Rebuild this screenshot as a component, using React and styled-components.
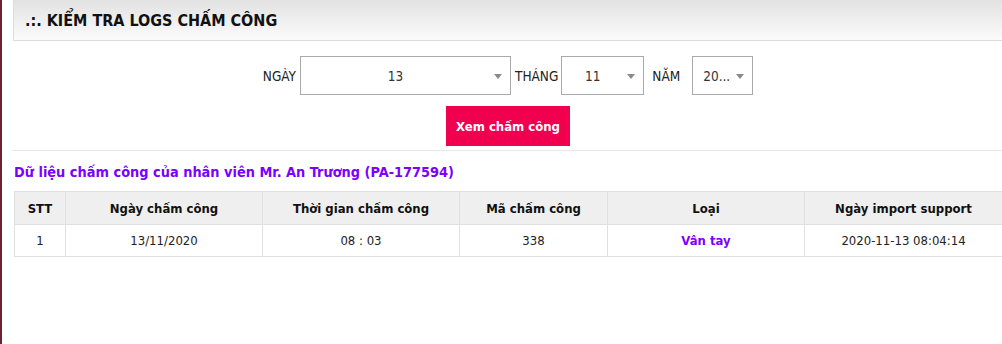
import styled, { createGlobalStyle } from 'styled-components';

const GlobalStyle = createGlobalStyle`
    body {
        margin: 0;
        background: #fff;
        font-family: "DejaVu Sans Condensed", "DejaVu Sans", Tahoma, sans-serif;
        overflow: hidden;
    }
`;

const Page = styled.div`
    border-left: 2px solid #6b2431;
    padding-left: 11px;
    min-height: 344px;
    box-sizing: border-box;
`;

const Content = styled.div`
    width: 990px;
`;

const Header = styled.div`
    height: 40px;
    border: 1px solid #dcdcdc;
    border-top: none;
    background: linear-gradient(to bottom, #e2e2e2, #fbfbfb);
    display: flex;
    align-items: center;
    padding-left: 11px;
`;

const Title = styled.h1`
    margin: 0;
    font-size: 16px;
    font-weight: bold;
    color: #111;
`;

const FilterRow = styled.div`
    display: flex;
    justify-content: center;
    align-items: center;
    margin-top: 15px;
`;

const Label = styled.span`
    font-size: 13.5px;
    color: #222;
    margin: ${(p) => p.$margin};
`;

const Select = styled.div`
    position: relative;
    box-sizing: border-box;
    width: ${(p) => p.$width}px;
    height: 39px;
    border: 1px solid #aaa;
    background: #fff;
    display: flex;
    align-items: center;
    justify-content: ${(p) => (p.$left ? 'flex-start' : 'center')};
    padding: ${(p) => (p.$left ? '0 0 0 10px' : '0 20px 0 0')};
    font-size: 13.5px;
    color: #333;

    &::after {
        content: '';
        position: absolute;
        right: 8px;
        top: 17px;
        border-left: 4px solid transparent;
        border-right: 4px solid transparent;
        border-top: 5px solid #8a8a8a;
    }
`;

const ButtonRow = styled.div`
    display: flex;
    justify-content: center;
    margin-top: 11px;
`;

const Button = styled.button`
    width: 124px;
    height: 40px;
    border: none;
    background: #f20050;
    color: #fff;
    font-family: inherit;
    font-size: 13px;
    font-weight: bold;
    white-space: nowrap;
    padding: 0;
    cursor: pointer;
`;

const Divider = styled.hr`
    margin: 4px 0 0;
    border: none;
    border-top: 1px solid #e6e6e6;
`;

const SubTitle = styled.h2`
    margin: 12px 0 0 1px;
    font-size: 14.4px;
    font-weight: bold;
    color: #7b00ff;
    line-height: 18px;
`;

const Table = styled.table`
    margin: 10px 0 0 1px;
    width: 988px;
    border-collapse: collapse;
    table-layout: fixed;
    font-size: 13px;
`;

const Th = styled.th`
    background: #efefef;
    border: 1px solid #e0e0e0;
    height: 32px;
    padding: 0;
    font-weight: bold;
    color: #111;
`;

const Td = styled.td`
    border: 1px solid #e0e0e0;
    height: 31px;
    padding: 0;
    text-align: center;
    color: ${(p) => (p.$accent ? '#7b00ff' : '#222')};
    font-weight: ${(p) => (p.$accent ? 'bold' : 'normal')};
`;

const columns = [
    { title: 'STT', width: 51 },
    { title: 'Ngày chấm công', width: 197 },
    { title: 'Thời gian chấm công', width: 197 },
    { title: 'Mã chấm công', width: 148 },
    { title: 'Loại', width: 197 },
    { title: 'Ngày import support', width: 198 },
];

const App = () => {
    return (
        <Page>
            <GlobalStyle />
            <Content>
                <Header>
                    <Title>.:. KIỂM TRA LOGS CHẤM CÔNG</Title>
                </Header>
                <FilterRow>
                    <Label $margin="0 4px 0 0">NGÀY</Label>
                    <Select $width={211}>13</Select>
                    <Label $margin="0 3px 0 4px">THÁNG</Label>
                    <Select $width={83}>11</Select>
                    <Label $margin="0 12px 0 8px">NĂM</Label>
                    <Select $width={61} $left>20...</Select>
                </FilterRow>
                <ButtonRow>
                    <Button>Xem chấm công</Button>
                </ButtonRow>
                <Divider />
                <SubTitle>Dữ liệu chấm công của nhân viên Mr. An Trương (PA-177594)</SubTitle>
                <Table>
                    <colgroup>
                        {columns.map((c) => (
                            <col key={c.title} style={{ width: c.width }} />
                        ))}
                    </colgroup>
                    <thead>
                        <tr>
                            {columns.map((c) => (
                                <Th key={c.title}>{c.title}</Th>
                            ))}
                        </tr>
                    </thead>
                    <tbody>
                        <tr>
                            <Td>1</Td>
                            <Td>13/11/2020</Td>
                            <Td>08 : 03</Td>
                            <Td>338</Td>
                            <Td $accent>Vân tay</Td>
                            <Td>2020-11-13 08:04:14</Td>
                        </tr>
                    </tbody>
                </Table>
            </Content>
        </Page>
    );
};

export default App;
